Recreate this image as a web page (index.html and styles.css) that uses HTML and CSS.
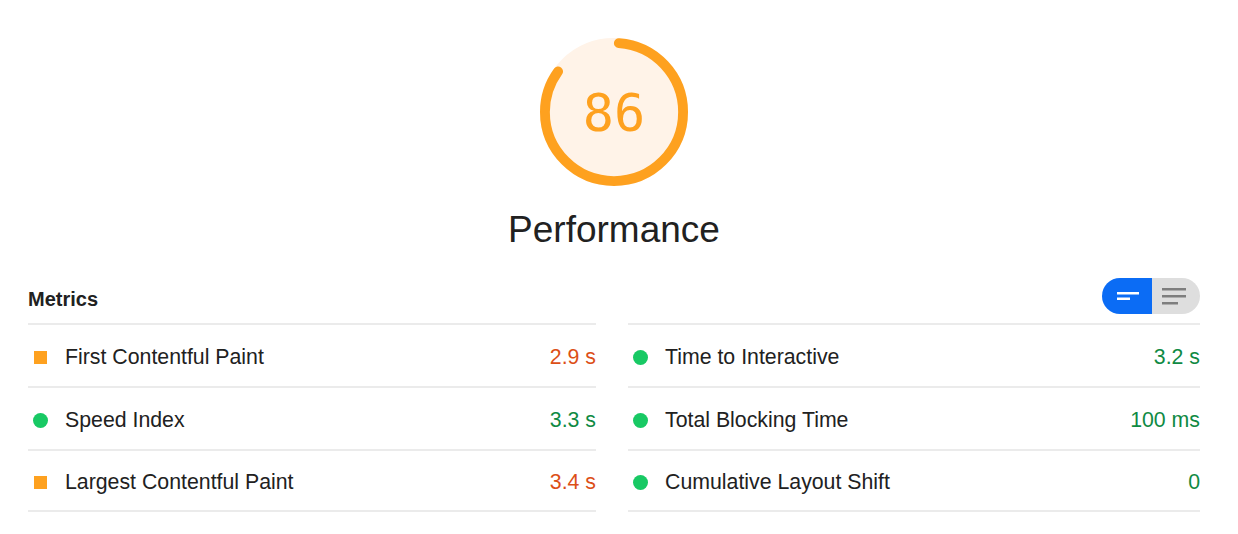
FILE: index.html
```html
<!DOCTYPE html>
<html lang="en">
<head>
  <meta charset="UTF-8">
  <title>Lighthouse - Performance</title>
  <link rel="stylesheet" href="styles.css">
</head>
<body>
  <div class="report">

    <div class="gauge">
      <svg class="gauge-svg" viewBox="0 0 120 120" width="148" height="148">
        <circle class="gauge-base" cx="60" cy="60" r="56"></circle>
        <circle class="gauge-arc" cx="60" cy="60" r="56" transform="rotate(-90 60 60)"></circle>
        <text class="gauge-score" x="60" y="75.5" text-anchor="middle">86</text>
      </svg>
      <div class="gauge-label">Performance</div>
    </div>

    <div class="metrics-header">
      <div class="metrics-title">Metrics</div>
      <div class="toggle">
        <button class="toggle-btn active" title="Expand view">
          <svg width="50" height="36" viewBox="0 0 50 36">
            <rect x="15" y="14" width="22" height="2.5" fill="#fff"></rect>
            <rect x="15" y="19.5" width="13" height="2.5" fill="#fff"></rect>
          </svg>
        </button>
        <button class="toggle-btn" title="Collapse view">
          <svg width="48" height="36" viewBox="0 0 48 36">
            <rect x="10" y="10" width="24" height="2.5" fill="#7e7e7e"></rect>
            <rect x="10" y="17" width="24" height="2.5" fill="#7e7e7e"></rect>
            <rect x="10" y="24" width="16" height="2.5" fill="#7e7e7e"></rect>
          </svg>
        </button>
      </div>
    </div>

    <div class="metrics">
      <div class="metric">
        <span class="metric-icon"><span class="square"></span></span>
        <span class="metric-name">First Contentful Paint</span>
        <span class="metric-value average">2.9 s</span>
      </div>
      <div class="metric">
        <span class="metric-icon"><span class="dot"></span></span>
        <span class="metric-name">Time to Interactive</span>
        <span class="metric-value pass">3.2 s</span>
      </div>
      <div class="metric">
        <span class="metric-icon"><span class="dot"></span></span>
        <span class="metric-name">Speed Index</span>
        <span class="metric-value pass">3.3 s</span>
      </div>
      <div class="metric">
        <span class="metric-icon"><span class="dot"></span></span>
        <span class="metric-name">Total Blocking Time</span>
        <span class="metric-value pass">100 ms</span>
      </div>
      <div class="metric">
        <span class="metric-icon"><span class="square"></span></span>
        <span class="metric-name">Largest Contentful Paint</span>
        <span class="metric-value average">3.4 s</span>
      </div>
      <div class="metric">
        <span class="metric-icon"><span class="dot"></span></span>
        <span class="metric-name">Cumulative Layout Shift</span>
        <span class="metric-value pass">0</span>
      </div>
    </div>

  </div>
</body>
</html>
```

FILE: styles.css
```css
body {
  margin: 0;
  padding: 0;
  background: #ffffff;
  color: #212121;
  font-family: 'Liberation Sans', Arial, sans-serif;
}

.report {
  width: 1172px;
  margin-left: 28px;
  padding-top: 38px;
}

/* gauge */
.gauge {
  display: flex;
  flex-direction: column;
  align-items: center;
}

.gauge-svg {
  display: block;
}

.gauge-base {
  fill: #fff3e8;
  stroke: #fff3e8;
  stroke-width: 8;
}

.gauge-arc {
  fill: none;
  stroke: #fea11f;
  stroke-width: 8;
  stroke-linecap: round;
  stroke-dasharray: 294.6 351.86;
  stroke-dashoffset: -4;
}

.gauge-score {
  fill: #fea11f;
  font-family: 'DejaVu Sans Mono', monospace;
  font-size: 42px;
}

.gauge-label {
  margin-top: 22px;
  font-size: 37px;
  line-height: 43px;
  color: #212121;
}

/* metrics */
.metrics-header {
  display: flex;
  justify-content: space-between;
  align-items: center;
  margin-top: 27px;
  padding-bottom: 9px;
}

.metrics-title {
  font-size: 20px;
  font-weight: bold;
  margin-top: 7px;
}

.toggle {
  display: flex;
  height: 36px;
  border-radius: 18px;
  overflow: hidden;
}

.toggle-btn {
  display: block;
  padding: 0;
  margin: 0;
  border: none;
  background: #dedede;
  cursor: pointer;
}

.toggle-btn svg {
  display: block;
}

.toggle-btn.active {
  background: #0b6cf5;
}

.metrics {
  display: grid;
  grid-template-columns: 568px 572px;
  column-gap: 32px;
}

.metric {
  display: flex;
  align-items: center;
  height: 58px;
  padding: 3px 0 0 4px;
  border-bottom: 2px solid #ebebeb;
  font-size: 21.3px;
}

.metric:nth-child(1),
.metric:nth-child(2) {
  border-top: 2px solid #ebebeb;
}

.metric:nth-child(5),
.metric:nth-child(6) {
  height: 56px;
}

.metric-icon {
  width: 16px;
  height: 16px;
  display: flex;
  align-items: center;
  justify-content: center;
}

.square {
  width: 13px;
  height: 13px;
  background: #fea11f;
}

.dot {
  width: 15px;
  height: 15px;
  border-radius: 50%;
  background: #18c964;
}

.metric-name {
  margin-left: 17px;
  flex: 1;
}

.metric-value.average {
  color: #dc4f17;
}

.metric-value.pass {
  color: #0f8a43;
}
```
